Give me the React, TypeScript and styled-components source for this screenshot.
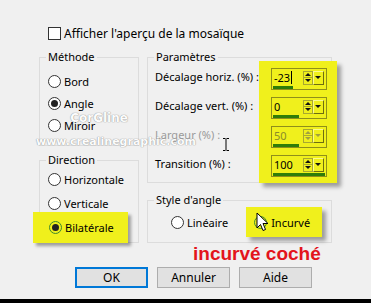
import styled, { createGlobalStyle } from "styled-components";

const GlobalStyle = createGlobalStyle`
  html, body {
    margin: 0;
    padding: 0;
    background: #f0f0f0;
  }
  body {
    font-family: "Noto Sans", "DejaVu Sans", sans-serif;
    font-size: 11px;
    color: #000;
  }
`;

const HL = "#f0f01c";

const Dialog = styled.div`
  position: relative;
  width: 371px;
  height: 299px;
  padding-top: 27px;
  box-sizing: border-box;
  background: #f0f0f0;
  overflow: hidden;
`;

const BlackBar = styled.div`
  width: 371px;
  height: 4px;
  background: #000;
`;

const CheckRow = styled.label`
  display: flex;
  align-items: center;
  gap: 3px;
  height: 13px;
  padding-left: 48px;
  font-size: 12px;
  line-height: 13px;
`;

const CheckBox = styled.span`
  width: 13px;
  height: 13px;
  box-sizing: border-box;
  border: 1px solid #333;
  background: #fff;
`;

const Columns = styled.div`
  display: flex;
  align-items: flex-start;
  gap: 8px;
  margin-top: 10px;
  padding-left: 39px;
`;

const Column = styled.div<{ $w: number; $gap: number }>`
  display: flex;
  flex-direction: column;
  gap: ${(p) => p.$gap}px;
  width: ${(p) => p.$w}px;
`;

const Group = styled.fieldset`
  margin: 0;
  padding: 0;
  min-width: 0;
  border: 1px solid #dcdcdc;
  position: relative;
`;

const Legend = styled.legend`
  margin-left: 6px;
  padding: 0 2px;
  line-height: 14px;
`;

const RadioList = styled.div<{ $row: number; $pt: number; $pb: number }>`
  display: flex;
  flex-direction: column;
  padding: ${(p) => p.$pt}px 0 ${(p) => p.$pb}px 8px;
  & > * {
    height: ${(p) => p.$row}px;
  }
`;

const Radio = styled.div<{ $hl?: boolean }>`
  display: flex;
  align-items: center;
  gap: 3px;
  box-sizing: border-box;
  ${(p) =>
    p.$hl &&
    `
    position: relative;
    z-index: 1;
    margin: -3px 0 -1px -15px;
    width: 95px;
    height: 31px !important;
    padding-left: 16px;
    background: ${HL};
    box-shadow: 3px 3px 3px rgba(0,0,0,0.35);
  `}
`;

const Circle = styled.span<{ $checked?: boolean; $hover?: boolean }>`
  display: inline-flex;
  align-items: center;
  justify-content: center;
  width: 13px;
  height: 13px;
  box-sizing: border-box;
  border-radius: 50%;
  border: 1px solid ${(p) => (p.$hover ? "#3f8a2e" : "#333")};
  background: ${(p) => (p.$hover ? "transparent" : "#fff")};
  &::after {
    content: "";
    display: ${(p) => (p.$checked ? "block" : "none")};
    width: 7px;
    height: 7px;
    border-radius: 50%;
    background: #222;
  }
`;

const ParamGrid = styled.div`
  display: grid;
  grid-template-columns: 1fr 78px;
  align-items: start;
  padding: 0 0 0 7px;
  margin-right: -3px;
`;

const LabelCol = styled.div`
  display: flex;
  flex-direction: column;
  gap: 7px;
  padding-top: 4px;
`;

const ParamLabel = styled.div<{ $disabled?: boolean }>`
  height: 22px;
  padding-top: 1px;
  line-height: 16px;
  box-sizing: border-box;
  color: ${(p) => (p.$disabled ? "#9a9a9a" : "#000")};
  white-space: nowrap;
`;

const SpinPanel = styled.div`
  position: relative;
  z-index: 1;
  display: flex;
  flex-direction: column;
  gap: 7px;
  margin: -3px 0 -1px 0;
  padding: 7px 10px 6px 12px;
  background: ${HL};
  box-shadow: 4px 4px 4px rgba(0, 0, 0, 0.35);
`;

const Spin = styled.div<{ $disabled?: boolean }>`
  display: flex;
  flex-direction: column;
  width: 56px;
  height: 22px;
  box-sizing: border-box;
  border: 1px solid #8f8f1a;
  color: ${(p) => (p.$disabled ? "#8a8a2a" : "#000")};
`;

const SpinTop = styled.div`
  display: flex;
  align-items: center;
  height: 17px;
  padding-right: 2px;
`;

const SpinValue = styled.div`
  flex: 1;
  padding-left: 2px;
  line-height: 17px;
  display: flex;
  align-items: center;
`;

const Caret = styled.span`
  display: inline-block;
  width: 1px;
  height: 13px;
  background: #000;
  margin-left: 1px;
`;

const Arrows = styled.div`
  display: flex;
  flex-direction: column;
  width: 10px;
  height: 14px;
`;

const ArrowHalf = styled.div<{ $down?: boolean; $disabled?: boolean }>`
  flex: 1;
  display: flex;
  align-items: center;
  justify-content: center;
  border: 1px solid #a8a830;
  ${(p) => (p.$down ? "border-top: none;" : "")}
  &::after {
    content: "";
    border-left: 3px solid transparent;
    border-right: 3px solid transparent;
    ${(p) => (p.$down ? "border-top" : "border-bottom")}: 3px solid
      ${(p) => (p.$disabled ? "#a0a040" : "#111")};
  }
`;

const DropBtn = styled.div<{ $disabled?: boolean }>`
  display: flex;
  align-items: center;
  justify-content: center;
  width: 11px;
  height: 14px;
  box-sizing: border-box;
  border: 1px solid #fbfb90;
  border-right-color: #6e6e10;
  border-bottom-color: #6e6e10;
  &::after {
    content: "";
    border-left: 3px solid transparent;
    border-right: 3px solid transparent;
    border-top: 3px solid ${(p) => (p.$disabled ? "#a0a040" : "#111")};
  }
`;

const Bar = styled.div`
  height: 3px;
  margin-left: 1px;
  background: #2f7d08;
`;

const StyleRow = styled.div`
  display: flex;
  align-items: center;
  height: 30px;
  padding: 0 0 5px 23px;
  gap: 3px;
`;

const HoverBox = styled.div`
  position: relative;
  display: flex;
  align-items: center;
  gap: 4px;
  margin-left: 15px;
  width: 76px;
  height: 30px;
  padding-left: 8px;
  box-sizing: border-box;
  background: ${HL};
  box-shadow: 4px 4px 4px rgba(0, 0, 0, 0.35);
  z-index: 1;
`;

const Pointer = styled.svg`
  position: absolute;
  left: 10px;
  top: 5px;
`;

const Note = styled.div`
  margin: -10px 0 0 46px;
  height: 22px;
  line-height: 22px;
  font-family: "Liberation Sans", Arial, sans-serif;
  font-weight: bold;
  font-size: 19px;
  color: #e3141c;
  white-space: nowrap;
`;

const Buttons = styled.div`
  display: flex;
  gap: 9px;
  margin-top: 2px;
  padding-left: 75px;
`;

const Button = styled.button<{ $default?: boolean }>`
  width: 73px;
  height: 21px;
  margin: 0;
  padding: 0;
  font: inherit;
  font-size: 12px;
  color: #000;
  background: #e1e1e1;
  border: 1px solid ${(p) => (p.$default ? "#0078d7" : "#adadad")};
  box-shadow: ${(p) => (p.$default ? "inset 0 0 0 1px #0078d7" : "none")};
`;

const IBeam = styled.svg`
  position: absolute;
  left: 222px;
  top: 138px;
`;

const Watermark = styled.div`
  position: absolute;
  left: 36px;
  top: 112px;
  display: flex;
  flex-direction: column;
  align-items: center;
  font-family: "DejaVu Sans", sans-serif;
  font-weight: bold;
  font-size: 11px;
  line-height: 13px;
  color: #fff;
  text-shadow: 0 0 1px #888, 0 0 1px #888;
  opacity: 0.85;
  pointer-events: none;
`;

const WatermarkName = styled.span`
  font-size: 12px;
  margin-left: -34px;
  margin-bottom: 10px;
`;

type SpinProps = { value: string; bar: number; caret?: boolean; disabled?: boolean };

function Spinner({ value, bar, caret, disabled }: SpinProps) {
  return (
    <Spin $disabled={disabled}>
      <SpinTop>
        <SpinValue>
          {value}
          {caret && <Caret />}
        </SpinValue>
        <Arrows>
          <ArrowHalf $disabled={disabled} />
          <ArrowHalf $down $disabled={disabled} />
        </Arrows>
        <DropBtn $disabled={disabled} />
      </SpinTop>
      <Bar style={{ width: bar }} />
    </Spin>
  );
}

export default function App() {
  return (
    <>
      <GlobalStyle />
      <Dialog>
        <CheckRow>
          <CheckBox />
          Afficher l'aperçu de la mosaïque
        </CheckRow>
        <Columns>
          <Column $w={100} $gap={7}>
            <Group>
              <Legend>Méthode</Legend>
              <RadioList $row={22} $pt={6} $pb={9}>
                <Radio>
                  <Circle />
                  Bord
                </Radio>
                <Radio>
                  <Circle $checked />
                  Angle
                </Radio>
                <Radio>
                  <Circle />
                  Miroir
                </Radio>
              </RadioList>
            </Group>
            <Group>
              <Legend>Direction</Legend>
              <RadioList $row={24} $pt={0} $pb={0}>
                <Radio>
                  <Circle />
                  Horizontale
                </Radio>
                <Radio>
                  <Circle />
                  Verticale
                </Radio>
                <Radio $hl>
                  <Circle $checked $hover />
                  Bilatérale
                </Radio>
              </RadioList>
            </Group>
          </Column>
          <Column $w={185} $gap={10}>
            <Group>
              <Legend>Paramètres</Legend>
              <ParamGrid>
                <LabelCol>
                  <ParamLabel>Décalage horiz. (%) :</ParamLabel>
                  <ParamLabel>Décalage vert. (%) :</ParamLabel>
                  <ParamLabel $disabled>Largeur (%) :</ParamLabel>
                  <ParamLabel>Transition (%) :</ParamLabel>
                </LabelCol>
                <SpinPanel>
                  <Spinner value="-23" bar={20} caret />
                  <Spinner value="0" bar={26} />
                  <Spinner value="50" bar={26} disabled />
                  <Spinner value="100" bar={52} />
                </SpinPanel>
              </ParamGrid>
            </Group>
            <Group>
              <Legend>Style d'angle</Legend>
              <StyleRow>
                <Circle />
                Linéaire
                <HoverBox>
                  <Circle $hover />
                  Incurvé
                  <Pointer width="13" height="20" viewBox="0 0 13 20">
                    <path
                      d="M1 1 L1 16 L4.5 12.5 L7 18.5 L9.5 17.5 L7 11.5 L12 11.5 Z"
                      fill="#fff"
                      stroke="#000"
                      strokeWidth="1"
                      strokeLinejoin="round"
                    />
                  </Pointer>
                </HoverBox>
              </StyleRow>
            </Group>
            <Note>incurvé coché</Note>
          </Column>
        </Columns>
        <Buttons>
          <Button $default>OK</Button>
          <Button>Annuler</Button>
          <Button>Aide</Button>
        </Buttons>
        <IBeam width="8" height="13" viewBox="0 0 8 13">
          <path d="M1 0.5 H3.5 M4.5 0.5 H7 M4 1 V12 M1 12.5 H3.5 M4.5 12.5 H7" stroke="#000" strokeWidth="1" fill="none" />
        </IBeam>
        <Watermark>
          <WatermarkName>CorGline</WatermarkName>
          <span>www.crealinegraphic.com</span>
        </Watermark>
      </Dialog>
      <BlackBar />
    </>
  );
}
